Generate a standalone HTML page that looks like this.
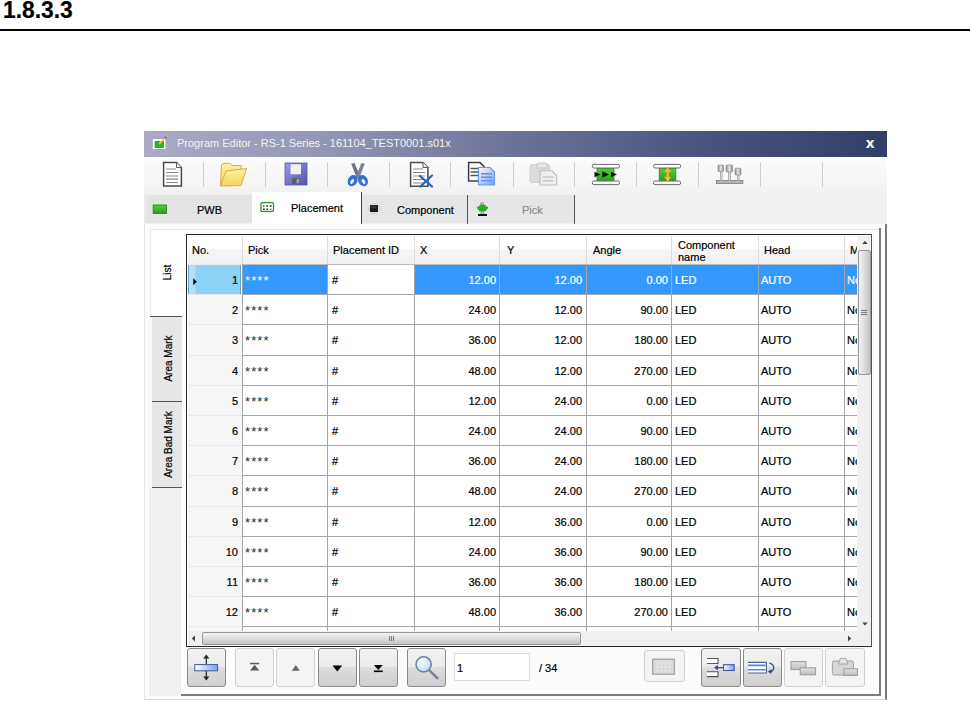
<!DOCTYPE html>
<html><head><meta charset="utf-8"><title>1.8.3.3</title>
<style>
html,body{margin:0;padding:0;background:#fff;}
body{width:970px;height:701px;overflow:hidden;position:relative;font-family:"Liberation Sans",sans-serif;font-size:11px;color:#000;}
.a{position:absolute;}
.t{position:absolute;white-space:nowrap;line-height:13px;-webkit-text-stroke:0.2px currentColor;}
.r{text-align:right;}
.sep{position:absolute;top:162px;width:1px;height:25px;background:#cecece;}
.vl{position:absolute;width:1px;background:#a6a6a6;}
.hl{position:absolute;height:1px;background:#a6a6a6;}
.btn{position:absolute;box-sizing:border-box;border:1px solid #8a8a8a;border-radius:3px;background:linear-gradient(#f2f2f2 0%,#ebebeb 49%,#dddddd 50%,#cfcfcf 100%);}
.btn.dis{border-color:#d0d0d0;background:#f4f4f4;}
</style></head><body>
<div class="t" style="left:3px;top:-2px;font-size:24px;line-height:24px;font-weight:bold;transform:scaleX(0.95);transform-origin:0 0;">1.8.3.3</div>
<div class="a" style="left:0;top:29px;width:970px;height:2px;background:#000;"></div>

<div class="a" style="left:144px;top:131px;width:743px;height:570px;background:#fbfbfb;"></div>
<div class="a" style="left:144px;top:131px;width:743px;height:26px;background:linear-gradient(90deg,#a9aac6 0%,#9295b5 25%,#6c7398 50%,#4a547f 75%,#323d68 100%);"></div>
<div class="t" style="left:177px;top:137px;color:#f4f4ec;-webkit-text-stroke:0;">Program Editor - RS-1 Series - 161104_TEST0001.s01x</div>
<div class="t" style="left:866px;top:135px;color:#fff;font-weight:bold;font-size:15px;line-height:15px;">x</div>
<div class="a" style="left:144px;top:157px;width:743px;height:37px;background:linear-gradient(#fdfdfd,#f1f1f1);"></div>
<div class="sep" style="left:203px;"></div>
<div class="sep" style="left:265px;"></div>
<div class="sep" style="left:327px;"></div>
<div class="sep" style="left:389px;"></div>
<div class="sep" style="left:450px;"></div>
<div class="sep" style="left:513px;"></div>
<div class="sep" style="left:574px;"></div>
<div class="sep" style="left:636px;"></div>
<div class="sep" style="left:698px;"></div>
<div class="sep" style="left:760px;"></div>
<div class="sep" style="left:822px;"></div>
<div class="a" style="left:144px;top:194px;width:743px;height:30px;background:#f0f0f0;"></div>
<div class="a" style="left:146px;top:195px;width:106px;height:28px;background:#e4e4e4;"></div>
<div class="a" style="left:252px;top:192px;width:109px;height:34px;background:#fff;"></div>
<div class="a" style="left:361px;top:192px;width:1px;height:33px;background:#444;"></div>
<div class="a" style="left:362px;top:195px;width:105px;height:28px;background:#e6e6e6;"></div>
<div class="a" style="left:467px;top:195px;width:1px;height:29px;background:#555;"></div>
<div class="a" style="left:468px;top:195px;width:106px;height:28px;background:#e6e6e6;"></div>
<div class="a" style="left:574px;top:195px;width:1px;height:29px;background:#555;"></div>
<div class="t" style="left:197px;top:204px;">PWB</div>
<div class="t" style="left:291px;top:202px;">Placement</div>
<div class="t" style="left:397px;top:204px;">Component</div>
<div class="t" style="left:522px;top:204px;color:#8a8a8a;">Pick</div>
<div class="a" style="left:144px;top:224px;width:743px;height:477px;background:#fcfcfc;"></div>
<div class="a" style="left:885px;top:224px;width:2px;height:476px;background:#7a7a7a;"></div>
<div class="a" style="left:144px;top:699px;width:742px;height:1px;background:#dadada;"></div>
<div class="a" style="left:144px;top:194px;width:1px;height:506px;background:#e6e6e6;"></div>
<div class="a" style="left:149px;top:317px;width:32px;height:379px;background:#f0f0f0;"></div>
<div class="a" style="left:150px;top:229px;width:36px;height:87px;background:#fff;border-left:1px solid #e8e8e8;border-top:1px solid #e8e8e8;box-sizing:border-box;"></div>
<div class="a" style="left:149px;top:317px;width:3px;height:171px;background:#fbfbfb;"></div>
<div class="a" style="left:150px;top:316px;width:32px;height:1px;background:#555;"></div>
<div class="a" style="left:152px;top:317px;width:30px;height:84px;background:#e6e6e6;"></div>
<div class="a" style="left:152px;top:401px;width:30px;height:1px;background:#555;"></div>
<div class="a" style="left:152px;top:402px;width:30px;height:85px;background:#e6e6e6;"></div>
<div class="a" style="left:152px;top:487px;width:30px;height:1px;background:#555;"></div>
<div class="a" style="left:182px;top:229px;width:698px;height:1px;background:#e4e4e4;"></div>
<div class="a" style="left:879px;top:228px;width:2px;height:468px;background:#7c7c7c;"></div>
<div class="a" style="left:181px;top:694px;width:700px;height:2px;background:#7c7c7c;"></div>
<div class="t" style="left:167px;top:273px;width:0;height:0;"><div style="position:absolute;left:-60px;top:-7px;width:120px;height:13px;text-align:center;font-size:10px;transform:rotate(-90deg);">List</div></div>
<div class="t" style="left:168px;top:359px;width:0;height:0;"><div style="position:absolute;left:-60px;top:-7px;width:120px;height:13px;text-align:center;font-size:10px;transform:rotate(-90deg);">Area Mark</div></div>
<div class="t" style="left:168px;top:445px;width:0;height:0;"><div style="position:absolute;left:-60px;top:-7px;width:120px;height:13px;text-align:center;font-size:10px;transform:rotate(-90deg);">Area Bad Mark</div></div>
<svg class="a" style="left:144px;top:131px;" width="743" height="96" viewBox="144 131 743 96">
<defs>
<linearGradient id="gF" x1="0" y1="0" x2="1" y2="1"><stop offset="0" stop-color="#9a9aea"/><stop offset="1" stop-color="#5656a8"/></linearGradient>
<linearGradient id="gY" x1="0" y1="0" x2="0" y2="1"><stop offset="0" stop-color="#fdf2a8"/><stop offset="1" stop-color="#f6d45c"/></linearGradient>
<linearGradient id="gB" x1="0" y1="0" x2="1" y2="1"><stop offset="0" stop-color="#ffffff"/><stop offset="1" stop-color="#6f9cf0"/></linearGradient>
<linearGradient id="gG" x1="0" y1="0" x2="0" y2="1"><stop offset="0" stop-color="#56cf3c"/><stop offset="1" stop-color="#2aa01c"/></linearGradient>
<linearGradient id="gN" x1="0" y1="0" x2="1" y2="0"><stop offset="0" stop-color="#8e8e8e"/><stop offset="0.5" stop-color="#e6e6e6"/><stop offset="1" stop-color="#8e8e8e"/></linearGradient>
</defs>
<!-- title icon -->
<g>
<rect x="152.8" y="139" width="12.7" height="10" fill="#fdfdfd"/><rect x="154.6" y="141" width="9.4" height="7" fill="#2cb41e"/><path d="M159.2 143.8 L164.6 138.4" stroke="#ffc81e" stroke-width="1.7"/><circle cx="165.3" cy="137.6" r="1" fill="#c8501e"/>
</g>
<!-- new doc -->
<path d="M163.6 162.6 H176.5 L181.4 167.5 V186 H163.6 Z" fill="#fff" stroke="#4a4a4a" stroke-width="1.5"/>
<path d="M176.5 162.5 V167.5 H181.5" fill="#eee" stroke="#555" stroke-width="1"/>
<path d="M166 169 H176 M166 172.5 H178 M166 176 H178 M166 179.2 H178 M166 182.5 H178" stroke="#8a8a8a" stroke-width="1.2"/>
<!-- folder -->
<path d="M220.5 186 L221.5 165 L224 163.3 H230 L232 165.5 H241 V171" fill="url(#gY)" stroke="#d9ae3c" stroke-width="1"/>
<path d="M220.5 186 L226 171 L246.5 168.5 L241 185.5 Z" fill="url(#gY)" stroke="#d9ae3c" stroke-width="1"/>
<!-- floppy -->
<rect x="285" y="163" width="22" height="22" fill="url(#gF)" stroke="#5252a6" stroke-width="0.8"/>
<rect x="290.5" y="164.3" width="10.5" height="10" fill="#f1f1f4"/>
<rect x="292" y="178.3" width="7.7" height="5.6" fill="#55605f"/>
<rect x="296.5" y="179" width="2.6" height="4.4" fill="#9aa6a4"/>
<!-- scissors -->
<path d="M351.2 163.8 L354.6 163 L360.2 177 L357 178.6 Z" fill="#6a7182"/>
<path d="M364.8 163.8 L361.4 163 L355.8 177 L359 178.6 Z" fill="#7c8496"/>
<ellipse cx="352.6" cy="180.6" rx="4.7" ry="5.9" transform="rotate(30 352.6 180.6)" fill="#3570d6"/>
<ellipse cx="363" cy="180.6" rx="4.7" ry="5.9" transform="rotate(-30 363 180.6)" fill="#3570d6"/>
<ellipse cx="352.1" cy="181.5" rx="1.5" ry="2.7" transform="rotate(30 352.1 181.5)" fill="#f4f6fb"/>
<ellipse cx="363.5" cy="181.5" rx="1.5" ry="2.7" transform="rotate(-30 363.5 181.5)" fill="#f4f6fb"/>
<!-- doc with X -->
<path d="M410.6 162.6 H423 L427.9 167.5 V186.3 H410.6 Z" fill="#fff" stroke="#4a4a4a" stroke-width="1.5"/>
<path d="M423 162.5 V167.5 H428" fill="#eee" stroke="#555" stroke-width="1"/>
<path d="M413 169 H423 M413 172.5 H425 M413 176 H425 M413 179.5 H425 M413 183 H425" stroke="#8a8a8a" stroke-width="1.2"/>
<path d="M420 176 L432 186.5 M432 175.5 L420.5 186.5" stroke="#2c5ec2" stroke-width="2.2" stroke-linecap="round"/>
<!-- copy -->
<path d="M468.6 162.6 H480 L484.5 167 V181 H468.6 Z" fill="#fff" stroke="#3c3c3c" stroke-width="1.5"/>
<path d="M470.5 168.5 H480 M470.5 172 H480 M470.5 175.5 H480" stroke="#555" stroke-width="1.3"/>
<path d="M478.5 167.5 H490 L494.5 172 V185 H478.5 Z" fill="url(#gB)" stroke="#6f97e6" stroke-width="1.2"/>
<path d="M481 173.7 H492 M481 177.2 H492 M481 180.6 H492" stroke="#5f8fe8" stroke-width="1.4"/>
<!-- paste (disabled) -->
<rect x="530" y="164.5" width="20" height="18" rx="2" fill="#dcdcdc" stroke="#cfcfcf"/>
<path d="M536 168 L538 163 H546 L548 168 Z" fill="#e6e6e6" stroke="#c6c6c6"/>
<path d="M540 170.8 H552 L556.7 175.5 V185 H540 Z" fill="#efefef" stroke="#bdbdbd" stroke-width="1.1"/>
<path d="M542.5 177 H553.5 M542.5 180.8 H553.5" stroke="#c6c6c6" stroke-width="1.5"/>
<!-- conveyor 1 -->
<rect x="597" y="168" width="17" height="13" fill="url(#gG)" stroke="#258a18" stroke-width="0.8"/>
<rect x="592.3" y="164.4" width="27.2" height="3.6" rx="1.6" fill="#fff" stroke="#6a6a6a" stroke-width="1"/>
<rect x="592.3" y="181" width="27.2" height="3.6" rx="1.6" fill="#fff" stroke="#6a6a6a" stroke-width="1"/>
<path d="M594.5 171.8 L600.5 174.5 L594.5 177.2 Z M602.3 171.3 L609 174.5 L602.3 177.7 Z M611 171.8 L617 174.5 L611 177.2 Z" fill="#111"/>
<!-- conveyor 2 -->
<rect x="659.2" y="168" width="16.6" height="13" fill="url(#gG)" stroke="#258a18" stroke-width="0.8"/>
<rect x="653.5" y="164.4" width="27.2" height="3.6" rx="1.6" fill="#fff" stroke="#6a6a6a" stroke-width="1"/>
<rect x="653.5" y="181" width="27.2" height="3.6" rx="1.6" fill="#fff" stroke="#6a6a6a" stroke-width="1"/>
<path d="M667.7 167.6 L671 172 H668.6 V177 H671 L667.7 181.4 L664.4 177 H666.8 V172 H664.4 Z" fill="#ffc21c" stroke="#f0a010" stroke-width="0.5"/>
<!-- nozzles -->
<rect x="716.3" y="180.5" width="26.6" height="3" fill="#b4b4b4" stroke="#7d7d7d" stroke-width="0.8"/>
<rect x="720" y="171" width="2.4" height="9.5" fill="url(#gN)"/>
<rect x="728.2" y="171.5" width="2.8" height="9" fill="url(#gN)"/>
<rect x="737" y="174.5" width="2.4" height="6" fill="url(#gN)"/>
<rect x="718" y="165" width="5.6" height="6.6" rx="1" fill="url(#gN)" stroke="#808080" stroke-width="0.6"/>
<rect x="726" y="165" width="6.6" height="7" rx="1" fill="url(#gN)" stroke="#808080" stroke-width="0.6"/>
<rect x="735" y="168.2" width="6" height="6.8" rx="1" fill="url(#gN)" stroke="#808080" stroke-width="0.6"/>
<!-- tab icons -->
<rect x="153.2" y="205" width="13.3" height="8.4" fill="url(#gG)" stroke="#23861a" stroke-width="0.9"/>
<rect x="260.9" y="202.6" width="12.6" height="8.8" rx="1.2" fill="#fff" stroke="#2a962a" stroke-width="1.3"/>
<path d="M263 206 h1.4 M266.3 206 h1.8 M269.8 206 h1.8 M263 209.3 h1.8 M266.3 209.3 h1.8" stroke="#333" stroke-width="1.5"/>
<path d="M269.8 209.3 h1.8" stroke="#888" stroke-width="1.5"/>
<path d="M371.3 203.8 h5.5 M371.3 213.4 h5.5" stroke="#cfcfcf" stroke-width="1.6"/>
<path d="M368.7 206.3 v4.6 M379.6 206.3 v4.6" stroke="#d4d4d4" stroke-width="1.8"/>
<rect x="370" y="205" width="8" height="7" fill="#1c1c1c"/>
<rect x="370.6" y="205.4" width="6" height="3" fill="#444" opacity="0.6"/>
<path d="M481.2 202.2 v12 M483.2 202.2 v12" stroke="#8c8cac" stroke-width="1.2"/>
<path d="M480 205 H485 L486 207 H488 L487 209.2 H486.4 L485.8 211 H479.2 L478.6 209.2 H478 L477 207 H479 Z" fill="#1fb41f" stroke="#18a018" stroke-width="0.5"/>
<rect x="478" y="214" width="9" height="2" fill="#111"/>
</svg>

<div class="a" style="left:186px;top:234px;width:686px;height:413px;background:#fff;"></div>
<div class="a" style="left:188px;top:236px;width:669px;height:28px;background:linear-gradient(#ffffff 0%,#ffffff 42%,#f5f5f7 50%,#f0f0f3 100%);"></div>
<div class="a" style="left:188px;top:264px;width:54px;height:367px;background:#f6f6f7;"></div>
<div class="a" style="left:243px;top:265px;width:614px;height:29px;background:#3399ff;"></div>
<div class="a" style="left:328px;top:265px;width:86px;height:29px;background:#fff;"></div>
<div class="a" style="left:188px;top:264px;width:53px;height:31px;background:linear-gradient(90deg,#b4def7 0,#b4def7 6px,#8bd2f6 7px,#8bd2f6 100%);border:1px solid #62a6d6;border-top-color:#4f93bd;border-bottom-color:#4f93bd;box-sizing:border-box;"></div>
<svg class="a" style="left:193px;top:278px;" width="5" height="8" viewBox="0 0 5 8"><path d="M0.3 0.3 L3.8 3.8 L0.3 7.3 Z" fill="#000"/></svg>
<div class="hl" style="left:188px;top:264px;width:54px;background:#e8e8e8;"></div>
<div class="hl" style="left:242px;top:264px;width:615px;background:#bdbdbd;"></div>
<div class="hl" style="left:188px;top:294px;width:54px;background:#e8e8e8;"></div>
<div class="hl" style="left:242px;top:294px;width:615px;"></div>
<div class="hl" style="left:188px;top:324px;width:54px;background:#e8e8e8;"></div>
<div class="hl" style="left:242px;top:324px;width:615px;"></div>
<div class="hl" style="left:188px;top:355px;width:54px;background:#e8e8e8;"></div>
<div class="hl" style="left:242px;top:355px;width:615px;"></div>
<div class="hl" style="left:188px;top:385px;width:54px;background:#e8e8e8;"></div>
<div class="hl" style="left:242px;top:385px;width:615px;"></div>
<div class="hl" style="left:188px;top:415px;width:54px;background:#e8e8e8;"></div>
<div class="hl" style="left:242px;top:415px;width:615px;"></div>
<div class="hl" style="left:188px;top:445px;width:54px;background:#e8e8e8;"></div>
<div class="hl" style="left:242px;top:445px;width:615px;"></div>
<div class="hl" style="left:188px;top:475px;width:54px;background:#e8e8e8;"></div>
<div class="hl" style="left:242px;top:475px;width:615px;"></div>
<div class="hl" style="left:188px;top:506px;width:54px;background:#e8e8e8;"></div>
<div class="hl" style="left:242px;top:506px;width:615px;"></div>
<div class="hl" style="left:188px;top:536px;width:54px;background:#e8e8e8;"></div>
<div class="hl" style="left:242px;top:536px;width:615px;"></div>
<div class="hl" style="left:188px;top:566px;width:54px;background:#e8e8e8;"></div>
<div class="hl" style="left:242px;top:566px;width:615px;"></div>
<div class="hl" style="left:188px;top:596px;width:54px;background:#e8e8e8;"></div>
<div class="hl" style="left:242px;top:596px;width:615px;"></div>
<div class="hl" style="left:188px;top:626px;width:54px;background:#e8e8e8;"></div>
<div class="hl" style="left:242px;top:626px;width:615px;"></div>
<div class="vl" style="left:242px;top:264px;height:367px;"></div>
<div class="vl" style="left:242px;top:236px;height:28px;background:#dcdcdc;"></div>
<div class="vl" style="left:327px;top:264px;height:367px;"></div>
<div class="vl" style="left:327px;top:236px;height:28px;background:#dcdcdc;"></div>
<div class="vl" style="left:414px;top:264px;height:367px;"></div>
<div class="vl" style="left:414px;top:236px;height:28px;background:#dcdcdc;"></div>
<div class="vl" style="left:499px;top:264px;height:367px;"></div>
<div class="vl" style="left:499px;top:236px;height:28px;background:#dcdcdc;"></div>
<div class="vl" style="left:586px;top:264px;height:367px;"></div>
<div class="vl" style="left:586px;top:236px;height:28px;background:#dcdcdc;"></div>
<div class="vl" style="left:671px;top:264px;height:367px;"></div>
<div class="vl" style="left:671px;top:236px;height:28px;background:#dcdcdc;"></div>
<div class="vl" style="left:758px;top:264px;height:367px;"></div>
<div class="vl" style="left:758px;top:236px;height:28px;background:#dcdcdc;"></div>
<div class="vl" style="left:844px;top:264px;height:367px;"></div>
<div class="vl" style="left:844px;top:236px;height:28px;background:#dcdcdc;"></div>
<div class="t" style="left:192px;top:244px;">No.</div>
<div class="t" style="left:248px;top:244px;">Pick</div>
<div class="t" style="left:333px;top:244px;">Placement ID</div>
<div class="t" style="left:420px;top:244px;">X</div>
<div class="t" style="left:507px;top:244px;">Y</div>
<div class="t" style="left:593px;top:244px;">Angle</div>
<div class="t" style="left:764px;top:244px;">Head</div>
<div class="t" style="left:850px;top:244px;">M</div>
<div class="t" style="left:678px;top:239px;line-height:12px;">Component<br>name</div>
<div class="t r" style="left:200px;width:38px;top:274px;">1</div>
<div class="t" style="left:245px;top:273px;color:#fff;font-size:13px;line-height:15px;letter-spacing:1.1px;-webkit-text-stroke:0;">****</div>
<div class="t" style="left:332px;top:274px;">#</div>
<div class="t r" style="left:420px;width:76px;top:274px;color:#fff;">12.00</div>
<div class="t r" style="left:506px;width:76px;top:274px;color:#fff;">12.00</div>
<div class="t r" style="left:592px;width:76px;top:274px;color:#fff;">0.00</div>
<div class="t" style="left:675px;top:274px;color:#fff;">LED</div>
<div class="t" style="left:761px;top:274px;color:#fff;">AUTO</div>
<div class="t" style="left:847px;top:274px;color:#fff;width:10px;overflow:hidden;">No</div>
<div class="t r" style="left:200px;width:38px;top:304px;">2</div>
<div class="t" style="left:245px;top:303px;color:#2a2a2a;font-size:13px;line-height:15px;letter-spacing:1.1px;-webkit-text-stroke:0;">****</div>
<div class="t" style="left:332px;top:304px;">#</div>
<div class="t r" style="left:420px;width:76px;top:304px;color:#000;">24.00</div>
<div class="t r" style="left:506px;width:76px;top:304px;color:#000;">12.00</div>
<div class="t r" style="left:592px;width:76px;top:304px;color:#000;">90.00</div>
<div class="t" style="left:675px;top:304px;color:#000;">LED</div>
<div class="t" style="left:761px;top:304px;color:#000;">AUTO</div>
<div class="t" style="left:847px;top:304px;color:#000;width:10px;overflow:hidden;">No</div>
<div class="t r" style="left:200px;width:38px;top:334px;">3</div>
<div class="t" style="left:245px;top:333px;color:#2a2a2a;font-size:13px;line-height:15px;letter-spacing:1.1px;-webkit-text-stroke:0;">****</div>
<div class="t" style="left:332px;top:334px;">#</div>
<div class="t r" style="left:420px;width:76px;top:334px;color:#000;">36.00</div>
<div class="t r" style="left:506px;width:76px;top:334px;color:#000;">12.00</div>
<div class="t r" style="left:592px;width:76px;top:334px;color:#000;">180.00</div>
<div class="t" style="left:675px;top:334px;color:#000;">LED</div>
<div class="t" style="left:761px;top:334px;color:#000;">AUTO</div>
<div class="t" style="left:847px;top:334px;color:#000;width:10px;overflow:hidden;">No</div>
<div class="t r" style="left:200px;width:38px;top:365px;">4</div>
<div class="t" style="left:245px;top:364px;color:#2a2a2a;font-size:13px;line-height:15px;letter-spacing:1.1px;-webkit-text-stroke:0;">****</div>
<div class="t" style="left:332px;top:365px;">#</div>
<div class="t r" style="left:420px;width:76px;top:365px;color:#000;">48.00</div>
<div class="t r" style="left:506px;width:76px;top:365px;color:#000;">12.00</div>
<div class="t r" style="left:592px;width:76px;top:365px;color:#000;">270.00</div>
<div class="t" style="left:675px;top:365px;color:#000;">LED</div>
<div class="t" style="left:761px;top:365px;color:#000;">AUTO</div>
<div class="t" style="left:847px;top:365px;color:#000;width:10px;overflow:hidden;">No</div>
<div class="t r" style="left:200px;width:38px;top:395px;">5</div>
<div class="t" style="left:245px;top:394px;color:#2a2a2a;font-size:13px;line-height:15px;letter-spacing:1.1px;-webkit-text-stroke:0;">****</div>
<div class="t" style="left:332px;top:395px;">#</div>
<div class="t r" style="left:420px;width:76px;top:395px;color:#000;">12.00</div>
<div class="t r" style="left:506px;width:76px;top:395px;color:#000;">24.00</div>
<div class="t r" style="left:592px;width:76px;top:395px;color:#000;">0.00</div>
<div class="t" style="left:675px;top:395px;color:#000;">LED</div>
<div class="t" style="left:761px;top:395px;color:#000;">AUTO</div>
<div class="t" style="left:847px;top:395px;color:#000;width:10px;overflow:hidden;">No</div>
<div class="t r" style="left:200px;width:38px;top:425px;">6</div>
<div class="t" style="left:245px;top:424px;color:#2a2a2a;font-size:13px;line-height:15px;letter-spacing:1.1px;-webkit-text-stroke:0;">****</div>
<div class="t" style="left:332px;top:425px;">#</div>
<div class="t r" style="left:420px;width:76px;top:425px;color:#000;">24.00</div>
<div class="t r" style="left:506px;width:76px;top:425px;color:#000;">24.00</div>
<div class="t r" style="left:592px;width:76px;top:425px;color:#000;">90.00</div>
<div class="t" style="left:675px;top:425px;color:#000;">LED</div>
<div class="t" style="left:761px;top:425px;color:#000;">AUTO</div>
<div class="t" style="left:847px;top:425px;color:#000;width:10px;overflow:hidden;">No</div>
<div class="t r" style="left:200px;width:38px;top:455px;">7</div>
<div class="t" style="left:245px;top:454px;color:#2a2a2a;font-size:13px;line-height:15px;letter-spacing:1.1px;-webkit-text-stroke:0;">****</div>
<div class="t" style="left:332px;top:455px;">#</div>
<div class="t r" style="left:420px;width:76px;top:455px;color:#000;">36.00</div>
<div class="t r" style="left:506px;width:76px;top:455px;color:#000;">24.00</div>
<div class="t r" style="left:592px;width:76px;top:455px;color:#000;">180.00</div>
<div class="t" style="left:675px;top:455px;color:#000;">LED</div>
<div class="t" style="left:761px;top:455px;color:#000;">AUTO</div>
<div class="t" style="left:847px;top:455px;color:#000;width:10px;overflow:hidden;">No</div>
<div class="t r" style="left:200px;width:38px;top:485px;">8</div>
<div class="t" style="left:245px;top:484px;color:#2a2a2a;font-size:13px;line-height:15px;letter-spacing:1.1px;-webkit-text-stroke:0;">****</div>
<div class="t" style="left:332px;top:485px;">#</div>
<div class="t r" style="left:420px;width:76px;top:485px;color:#000;">48.00</div>
<div class="t r" style="left:506px;width:76px;top:485px;color:#000;">24.00</div>
<div class="t r" style="left:592px;width:76px;top:485px;color:#000;">270.00</div>
<div class="t" style="left:675px;top:485px;color:#000;">LED</div>
<div class="t" style="left:761px;top:485px;color:#000;">AUTO</div>
<div class="t" style="left:847px;top:485px;color:#000;width:10px;overflow:hidden;">No</div>
<div class="t r" style="left:200px;width:38px;top:516px;">9</div>
<div class="t" style="left:245px;top:515px;color:#2a2a2a;font-size:13px;line-height:15px;letter-spacing:1.1px;-webkit-text-stroke:0;">****</div>
<div class="t" style="left:332px;top:516px;">#</div>
<div class="t r" style="left:420px;width:76px;top:516px;color:#000;">12.00</div>
<div class="t r" style="left:506px;width:76px;top:516px;color:#000;">36.00</div>
<div class="t r" style="left:592px;width:76px;top:516px;color:#000;">0.00</div>
<div class="t" style="left:675px;top:516px;color:#000;">LED</div>
<div class="t" style="left:761px;top:516px;color:#000;">AUTO</div>
<div class="t" style="left:847px;top:516px;color:#000;width:10px;overflow:hidden;">No</div>
<div class="t r" style="left:200px;width:38px;top:546px;">10</div>
<div class="t" style="left:245px;top:545px;color:#2a2a2a;font-size:13px;line-height:15px;letter-spacing:1.1px;-webkit-text-stroke:0;">****</div>
<div class="t" style="left:332px;top:546px;">#</div>
<div class="t r" style="left:420px;width:76px;top:546px;color:#000;">24.00</div>
<div class="t r" style="left:506px;width:76px;top:546px;color:#000;">36.00</div>
<div class="t r" style="left:592px;width:76px;top:546px;color:#000;">90.00</div>
<div class="t" style="left:675px;top:546px;color:#000;">LED</div>
<div class="t" style="left:761px;top:546px;color:#000;">AUTO</div>
<div class="t" style="left:847px;top:546px;color:#000;width:10px;overflow:hidden;">No</div>
<div class="t r" style="left:200px;width:38px;top:576px;">11</div>
<div class="t" style="left:245px;top:575px;color:#2a2a2a;font-size:13px;line-height:15px;letter-spacing:1.1px;-webkit-text-stroke:0;">****</div>
<div class="t" style="left:332px;top:576px;">#</div>
<div class="t r" style="left:420px;width:76px;top:576px;color:#000;">36.00</div>
<div class="t r" style="left:506px;width:76px;top:576px;color:#000;">36.00</div>
<div class="t r" style="left:592px;width:76px;top:576px;color:#000;">180.00</div>
<div class="t" style="left:675px;top:576px;color:#000;">LED</div>
<div class="t" style="left:761px;top:576px;color:#000;">AUTO</div>
<div class="t" style="left:847px;top:576px;color:#000;width:10px;overflow:hidden;">No</div>
<div class="t r" style="left:200px;width:38px;top:606px;">12</div>
<div class="t" style="left:245px;top:605px;color:#2a2a2a;font-size:13px;line-height:15px;letter-spacing:1.1px;-webkit-text-stroke:0;">****</div>
<div class="t" style="left:332px;top:606px;">#</div>
<div class="t r" style="left:420px;width:76px;top:606px;color:#000;">48.00</div>
<div class="t r" style="left:506px;width:76px;top:606px;color:#000;">36.00</div>
<div class="t r" style="left:592px;width:76px;top:606px;color:#000;">270.00</div>
<div class="t" style="left:675px;top:606px;color:#000;">LED</div>
<div class="t" style="left:761px;top:606px;color:#000;">AUTO</div>
<div class="t" style="left:847px;top:606px;color:#000;width:10px;overflow:hidden;">No</div>
<div class="a" style="left:857px;top:236px;width:15px;height:395px;background:#f0f0f0;"></div>
<div class="a" style="left:858px;top:250px;width:13px;height:125px;box-sizing:border-box;border:1px solid #979797;border-radius:2px;background:linear-gradient(90deg,#f4f4f4,#dddddd 50%,#c4c4c4);"></div>
<svg class="a" style="left:862px;top:240px;" width="6" height="5" viewBox="0 0 6 5"><path d="M0.2 4 L3 0.8 L5.8 4 Z" fill="#444"/></svg>
<svg class="a" style="left:862px;top:622px;" width="6" height="4" viewBox="0 0 6 4"><path d="M0.2 0.6 L3 3.6 L5.8 0.6 Z" fill="#444"/></svg>
<div class="a" style="left:861px;top:310px;width:6px;height:1px;background:#777;box-shadow:0 2px 0 #777,0 4px 0 #777;"></div>
<div class="a" style="left:188px;top:631px;width:684px;height:15px;background:#f0f0f0;"></div>
<div class="a" style="left:202px;top:632px;width:379px;height:13px;box-sizing:border-box;border:1px solid #979797;border-radius:2px;background:linear-gradient(#f4f4f4,#dddddd 50%,#c4c4c4);"></div>
<svg class="a" style="left:191px;top:635px;" width="5" height="7" viewBox="0 0 5 7"><path d="M4 0.6 L0.8 3.5 L4 6.4 Z" fill="#444"/></svg>
<svg class="a" style="left:847px;top:635px;" width="5" height="7" viewBox="0 0 5 7"><path d="M1 0.6 L4.2 3.5 L1 6.4 Z" fill="#444"/></svg>
<div class="a" style="left:389px;top:636px;width:1px;height:5px;background:#777;box-shadow:2px 0 0 #777,4px 0 0 #777;"></div>
<div class="a" style="left:186px;top:234px;width:686px;height:1px;background:#2a2a2a;"></div>
<div class="a" style="left:186px;top:234px;width:1px;height:413px;background:#2a2a2a;"></div>
<div class="a" style="left:186px;top:646px;width:686px;height:1px;background:#2a2a2a;"></div>
<div class="a" style="left:871px;top:234px;width:1px;height:413px;background:#555;"></div>
<div class="btn " style="left:187px;top:648px;width:39px;height:39px;"></div>
<div class="btn dis" style="left:235px;top:648px;width:39px;height:39px;"></div>
<div class="btn dis" style="left:276px;top:648px;width:39px;height:39px;"></div>
<div class="btn " style="left:318px;top:648px;width:39px;height:39px;"></div>
<div class="btn " style="left:359px;top:648px;width:39px;height:39px;"></div>
<div class="btn " style="left:407px;top:648px;width:39px;height:39px;"></div>
<div class="btn dis" style="left:644px;top:650px;width:41px;height:32px;"></div>
<div class="btn " style="left:701px;top:648px;width:40px;height:39px;"></div>
<div class="btn " style="left:743px;top:648px;width:39px;height:39px;"></div>
<div class="btn dis" style="left:784px;top:648px;width:39px;height:39px;"></div>
<div class="btn dis" style="left:825px;top:648px;width:40px;height:39px;"></div>
<svg class="a" style="left:184px;top:646px;" width="690" height="44" viewBox="184 646 690 44">
<defs>
<linearGradient id="hB" x1="0" y1="0" x2="1" y2="0"><stop offset="0" stop-color="#ffffff"/><stop offset="1" stop-color="#7f9fe6"/></linearGradient>
<linearGradient id="hG" x1="0" y1="0" x2="0" y2="1"><stop offset="0" stop-color="#e2e2e2"/><stop offset="1" stop-color="#bdbdbd"/></linearGradient>
<radialGradient id="hM" cx="0.4" cy="0.35" r="0.7"><stop offset="0" stop-color="#ffffff"/><stop offset="1" stop-color="#b9d4f6"/></radialGradient>
</defs>
<!-- btn1: split -->
<path d="M206.3 656 V664 M206.3 671 V679.5" stroke="#222" stroke-width="1.2"/>
<path d="M203.3 658.6 L206.3 654.6 L209.3 658.6 Z M203.3 676.4 L206.3 680.4 L209.3 676.4 Z" fill="#222"/>
<rect x="194.8" y="664.6" width="22.8" height="6.2" fill="url(#hB)" stroke="#3a58a6" stroke-width="1"/>
<!-- btn2: first (disabled) -->
<rect x="250" y="662.8" width="9.2" height="1.5" fill="#5a5a5a"/>
<path d="M250 670.6 L254.6 664.8 L259.2 670.6 Z" fill="#5a5a5a"/>
<!-- btn3: up (disabled) -->
<path d="M291.8 670.8 L295.8 665 L299.8 670.8 Z" fill="#666"/>
<!-- btn4: down -->
<path d="M332.4 665.6 H342.2 L337.3 671.6 Z" fill="#000"/>
<!-- btn5: last -->
<path d="M373.9 665 H382.7 L378.3 669.9 Z" fill="#000"/>
<rect x="373.9" y="670.5" width="8.8" height="1.6" fill="#000"/>
<!-- btn6: search -->
<path d="M429.6 670.6 L437.4 678.2" stroke="#77889b" stroke-width="2.6" stroke-linecap="round"/>
<circle cx="423.6" cy="664.3" r="7.6" fill="url(#hM)" stroke="#6b7f99" stroke-width="1.5"/>
<!-- btnA: grid disabled -->
<rect x="652.6" y="659.2" width="21.8" height="15" fill="#dadada" stroke="#a4a4a4" stroke-width="1.3"/>
<g fill="#ececec">
<rect x="656.5" y="662.5" width="2" height="2"/><rect x="660.5" y="662.5" width="2" height="2"/><rect x="664.5" y="662.5" width="2" height="2"/><rect x="668.5" y="662.5" width="2" height="2"/>
<rect x="656.5" y="666" width="2" height="2"/><rect x="660.5" y="666" width="2" height="2"/><rect x="664.5" y="666" width="2" height="2"/><rect x="668.5" y="666" width="2" height="2"/>
<rect x="656.5" y="669.5" width="2" height="2"/><rect x="660.5" y="669.5" width="2" height="2"/><rect x="664.5" y="669.5" width="2" height="2"/><rect x="668.5" y="669.5" width="2" height="2"/>
</g>
<!-- btnB -->
<path d="M707 658.5 H718 V663.5 H707" fill="#fff" stroke="#555" stroke-width="1.1"/>
<path d="M707 671.8 H718 V676.6 H707" fill="#fff" stroke="#555" stroke-width="1.1"/>
<rect x="723.6" y="664.7" width="10.6" height="5.8" fill="url(#hB)" stroke="#3a58a6" stroke-width="1.1"/>
<path d="M723 667.6 H717" stroke="#2a4a98" stroke-width="1.2"/>
<path d="M714 667.6 L718 665 V670.2 Z" fill="#2a4a98"/>
<!-- btnC -->
<path d="M748 662.4 H766.4 V673 H748" fill="#fff" stroke="#50608a" stroke-width="1.1"/>
<path d="M748 665.4 H765.5 M748 669.8 H765.5" stroke="#5a82dc" stroke-width="1.6"/>
<path d="M769.4 663.2 C774.8 664.5 775 670 770.6 671.6" fill="none" stroke="#2a4a98" stroke-width="1.3"/>
<path d="M767.6 671.8 L771.4 669.2 L771.6 673.8 Z" fill="#2a4a98"/>
<!-- btnD disabled -->
<rect x="791" y="661.6" width="15" height="8" fill="url(#hG)" stroke="#9a9a9a" stroke-width="1"/>
<rect x="800.2" y="667.8" width="15.4" height="7" fill="url(#hG)" stroke="#9a9a9a" stroke-width="1"/>
<!-- btnE disabled -->
<rect x="832.4" y="661" width="21" height="14" rx="1.6" fill="#d6d6d6" stroke="#a2a2a2" stroke-width="1"/>
<path d="M838.4 664 L840.4 658.4 H846 L848 664 Z" fill="#e4e4e4" stroke="#a0a0a0" stroke-width="0.9"/>
<rect x="843.8" y="668.8" width="13.6" height="6.6" fill="url(#hG)" stroke="#9a9a9a" stroke-width="1"/>
</svg>

<div class="a" style="left:454px;top:653px;width:76px;height:28px;box-sizing:border-box;border:1px solid #dcdcdc;background:#fff;"></div>
<div class="t" style="left:457px;top:662px;">1</div>
<div class="t" style="left:539px;top:662px;">/ 34</div>
</body></html>
